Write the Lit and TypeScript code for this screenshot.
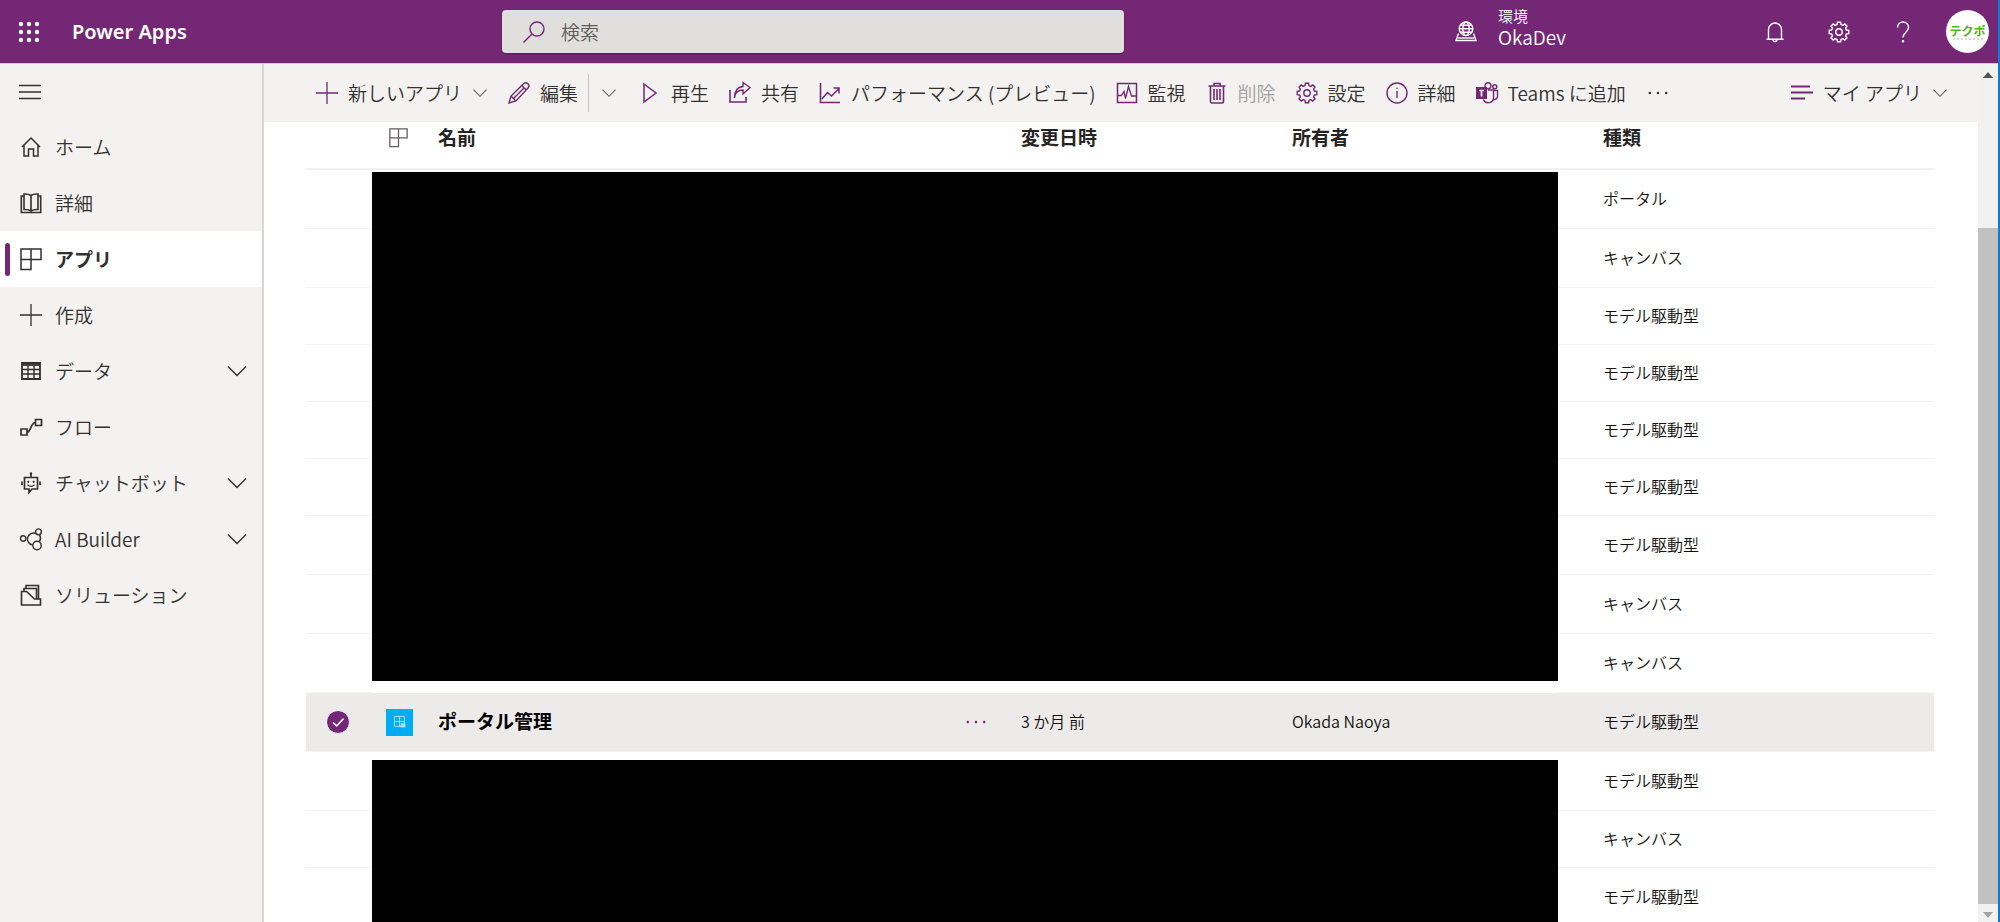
import { LitElement, html, svg, css, nothing, type SVGTemplateResult } from "lit";
import { customElement, property } from "lit/decorators.js";
import { classMap } from "lit/directives/class-map.js";

const GEAR = svg`<path d="M9.4 1.2h3.2l.4 2.4 1.8.8 2-1.4 2.2 2.2-1.4 2 .8 1.8 2.4.4v3.2l-2.4.4-.8 1.8 1.4 2-2.2 2.2-2-1.4-1.8.8-.4 2.4H9.4L9 18.4l-1.8-.8-2 1.4L3 16.8l1.4-2-.8-1.8-2.4-.4V9.4L3.6 9l.8-1.8L3 5.2 5.2 3l2 1.4L9 3.6z"/><circle cx="11" cy="11" r="3.2"/>`;

/* All glyphs share a 22 unit square and are stroked in the current colour. */
const ICONS: Record<string, SVGTemplateResult> = {
  launcher: svg`<g fill="currentColor" stroke="none">${[3, 11, 19].map((y) =>
    [3, 11, 19].map((x) => svg`<circle cx=${x} cy=${y} r="2.2"/>`))}</g>`,
  menu: svg`<path d="M0 4.5h22M0 11h22M0 17.5h22" stroke-width="1.6"/>`,
  search: svg`<circle cx="14" cy="8" r="7"/><path d="M9 13l-8.5 8.5"/>`,
  globe: svg`<circle cx="11" cy="7.8" r="6.8"/><ellipse cx="11" cy="7.8" rx="3.2" ry="6.8"/><path d="M4.2 7.8h13.6M5.2 4.3h11.6M5.2 11.3h11.6M3.5 12.5L1 19.5h20l-2.5-7"/><path d="M3 17h16"/>`,
  bell: svg`<path d="M2.5 18.3h17M4.5 18.3V8.5a6.5 6.5 0 0 1 13 0v9.8M9 18.5a2 2 0 0 0 4 0"/>`,
  gear: GEAR,
  help: svg`<path d="M5.5 6.5a5.5 5.5 0 0 1 11 0c0 4.5-5.5 5-5.5 10"/><circle cx="11" cy="20.3" r=".6" fill="currentColor"/>`,
  home: svg`<path d="M2 11l9-9 9 9M4 9.5V20h4.5v-7h5v7H18V9.5" stroke-width="1.5"/>`,
  book: svg`<path d="M11 3.5v15M11 3.5C9 2 7 1.800 4 2v15.5c3-.2 5 0 7 1.5 2-1.5 4-1.700 7-1.5V2c-3-.2-5 0-7 1.500" stroke-width="1.6"/><path d="M4 4H1.3v16.5h19.4V4H18" stroke-width="1.6"/>`,
  apps: svg`<path d="M1 1h20v10.5H1zM1 11.5V21.5h10V1" stroke-width="1.5"/>`,
  plus: svg`<path d="M11 0v22M0 11h22" stroke-width="1.3"/>`,
  table: svg`<path d="M2 3h18v16H2z" stroke-width="1.8"/><path d="M2 5h18" stroke-width="1.8"/><path d="M2 9.5h18M2 14h18M8 5v14M14 5v14"/>`,
  flow: svg`<path d="M1 13h6v6H1zM15.5 3.5h6v6h-6zM7 16.5c4 0 3.5-10 8.5-10" stroke-width="1.7"/>`,
  bot: svg`<path d="M4.5 5.5h13v11.5h-5.5L9 20.5V17H4.5zM11 5.5V2M2 9.5v3.5M20 9.5v3.5" stroke-width="1.7"/><circle cx="11" cy="1.5" r="1.2" fill="currentColor" stroke="none"/><circle cx="8.3" cy="9.8" r="1.1" fill="currentColor" stroke="none"/><circle cx="13.7" cy="9.8" r="1.1" fill="currentColor" stroke="none"/><path d="M7.5 12.8c2 2 5 2 7 0"/>`,
  ai: svg`<circle cx="3.2" cy="10.5" r="2.7"/><circle cx="18.5" cy="3.8" r="2.9"/><circle cx="17" cy="17.5" r="4.2"/><path d="M13 17a6 6 0 1 1 3-11.4M19.5 7a6 6 0 0 1 0 6.5"/>`,
  solution: svg`<path d="M1.5 21V7.5h5l8 7.5h6v6zM4 7.5V4.5h12.5V15M6 4.5V1.5h12.5V15" stroke-width="1.6"/>`,
  chevron: svg`<path d="M2 6.5l9 9 9-9"/>`,
  edit: svg`<path d="M1 21l2-7L15.5 1.8a2.6 2.6 0 0 1 4.5 4.2L8 19zM3 14l5 5M13.8 3.5l4.7 4.7M5.5 16.5L16 6"/>`,
  play: svg`<path d="M5 2l12 9-12 9z" stroke-width="1.5"/>`,
  share: svg`<path d="M1 8v12h16v-5" stroke-width="1.6"/><path d="M5.5 16c.5-5.5 3.5-8 8.5-8V12l7-6.5-7-5V4.5c-6 .5-8.5 5-8.5 11.5z" stroke-width="1.4"/>`,
  perf: svg`<path d="M1.5 1v19.5H21" stroke-width="1.6"/><path d="M3 17l5.5-6.5 4 3.5L20 6.5M14.5 6H20v5.5" stroke-width="1.5"/>`,
  monitor: svg`<path d="M1.5 1.5h19v19h-19z" stroke-width="1.5"/><path d="M2 13.5h3.5l2.5-4 1.5 7 3-12 3 9.5h5" stroke-width="1.3"/>`,
  trash: svg`<path d="M2.5 4h17M8 4V1.5h6V4M4.5 4v15.5a1.5 1.5 0 0 0 1.5 1.5h10a1.5 1.5 0 0 0 1.5-1.5V4M8 7v11M11 7v11M14 7v11" stroke-width="1.6"/>`,
  info: svg`<circle cx="11" cy="11" r="10"/><path d="M11 9v7"/><circle cx="11" cy="6.2" r=".8" fill="currentColor" stroke="none"/>`,
  teams: svg`<circle cx="12" cy="3.8" r="3"/><circle cx="18.8" cy="4.8" r="2"/><path d="M12 8h5.5v7.5a5.3 5.3 0 0 1-10.2 2M17.5 8.5h4v6a3 3 0 0 1-4 2.8"/><path d="M0 5h11v12H0z" fill="currentColor" stroke="none"/><path d="M3 8.5h5M5.5 8.5v6" stroke="#f3f2f1" stroke-width="1.7"/>`,
  more: svg`<g fill="currentColor" stroke="none"><circle cx="2" cy="11" r="1.4"/><circle cx="11" cy="11" r="1.4"/><circle cx="20" cy="11" r="1.4"/></g>`,
  view: svg`<path d="M0 4.5h19M0 10.5h22M0 16.5h14" stroke-width="2"/>`,
  check: svg`<path d="M5.5 11.5l4 3.8 7.5-8" stroke-width="1.7"/>`,
  portal: svg`<path d="M1 1h18v18H1zM10 1v18M1 10h18"/><path d="M12 13h9v8h-9z" fill="currentColor" stroke="none" opacity=".7"/>`,
};

@customElement("pa-icon")
class PaIcon extends LitElement {
  @property() name = "";
  static styles = css`
    :host { display: block; flex: none; width: 22px; height: 22px; }
    svg { display: block; width: 100%; height: 100%; overflow: visible; }
  `;
  render() {
    return html`<svg viewBox="0 0 22 22" fill="none" stroke="currentColor" stroke-width="1.4" aria-hidden="true">${ICONS[this.name]}</svg>`;
  }
}

interface NavItem { icon: string; label: string; expandable?: boolean; current?: boolean }
interface Command { icon: string; label: string; menu?: boolean; split?: boolean; disabled?: boolean }
interface AppRow { type: string; compact?: boolean }

const NAV: NavItem[] = [
  { icon: "home", label: "ホーム" },
  { icon: "book", label: "詳細" },
  { icon: "apps", label: "アプリ", current: true },
  { icon: "plus", label: "作成" },
  { icon: "table", label: "データ", expandable: true },
  { icon: "flow", label: "フロー" },
  { icon: "bot", label: "チャットボット", expandable: true },
  { icon: "ai", label: "AI Builder", expandable: true },
  { icon: "solution", label: "ソリューション" },
];

const COMMANDS: Command[] = [
  { icon: "plus", label: "新しいアプリ", menu: true },
  { icon: "edit", label: "編集", split: true },
  { icon: "play", label: "再生" },
  { icon: "share", label: "共有" },
  { icon: "perf", label: "パフォーマンス (プレビュー)" },
  { icon: "monitor", label: "監視" },
  { icon: "trash", label: "削除", disabled: true },
  { icon: "gear", label: "設定" },
  { icon: "info", label: "詳細" },
  { icon: "teams", label: "Teams に追加" },
];

const CANVAS = "キャンバス";
const MODEL = "モデル駆動型";

const ROWS_ABOVE: AppRow[] = [
  { type: "ポータル" },
  { type: CANVAS },
  { type: MODEL, compact: true },
  { type: MODEL, compact: true },
  { type: MODEL, compact: true },
  { type: MODEL, compact: true },
  { type: MODEL },
  { type: CANVAS },
  { type: CANVAS },
];

const ROWS_BELOW: AppRow[] = [
  { type: MODEL },
  { type: CANVAS, compact: true },
  { type: MODEL },
];

@customElement("app-root")
class AppRoot extends LitElement {
  static styles = css`
    :host {
      display: flex;
      flex-direction: column;
      height: 100vh;
      box-sizing: border-box;
      overflow: hidden;
      border-right: 2px solid #0f7ad1;
      background: #fff;
      color: #323130;
      font-family: "Noto Sans CJK JP", sans-serif;
      font-size: 19px;
      font-weight: 350;
      line-height: 28px;
    }
    *, *::before { box-sizing: border-box; }
    button, input { font: inherit; color: inherit; }
    button { display: flex; align-items: center; margin: 0; padding: 0; border: 0; background: none; white-space: nowrap; }
    a { color: inherit; text-decoration: none; }

    .header {
      display: grid;
      grid-template-columns: 502px minmax(0, 622px) 1fr;
      align-items: center;
      height: 64px;
      flex: none;
      background: #742774;
      border-bottom: 1px solid #d9c3d9;
      color: #fff;
    }
    .brand { display: flex; align-items: center; gap: 32px; padding-left: 18px; }
    .title { font-family: "Noto Sans", sans-serif; font-size: 20px; font-weight: 600; }
    .search {
      display: flex;
      align-items: center;
      gap: 16px;
      height: 43px;
      padding: 0 21px;
      border-radius: 4px;
      background: #e1dfdd;
      color: #742774;
      box-shadow: 0 1px 2px rgba(0, 0, 0, 0.3);
    }
    .search input { flex: 1; min-width: 0; padding: 0; border: 0; outline: 0; background: none; color: #323130; }
    .search input::placeholder { color: #605e5c; opacity: 1; }
    .tools { display: flex; align-items: center; justify-content: flex-end; padding-right: 9px; }
    .environment { gap: 21px; margin-right: 198px; text-align: left; }
    .environment-text { display: flex; flex-direction: column; padding-bottom: 10px; line-height: 22px; }
    .caption { font-size: 15px; line-height: 20px; }
    .actions { display: flex; align-items: center; gap: 42px; }
    .avatar {
      display: flex;
      flex-direction: column;
      align-items: center;
      justify-content: center;
      width: 43px;
      height: 43px;
      margin-left: 32px;
      border-radius: 50%;
      background: #fff;
      color: #4fb51c;
      font-size: 12px;
      font-weight: 700;
      line-height: 14px;
    }
    .avatar::after { content: ""; width: 30px; border-bottom: 2px dotted #d6d6d6; }

    .body { display: flex; flex: 1; min-height: 0; }
    .sidebar {
      flex: none;
      width: 264px;
      background: #f3f2f1;
      border-right: 2px solid #d8d6d5;
    }
    .toggle { height: 55px; padding: 0 19px; }
    .nav { display: flex; flex-direction: column; margin: 0; padding: 0; list-style: none; }
    .nav-link { display: flex; align-items: center; gap: 13px; height: 56px; padding: 0 14px 0 20px; }
    .nav-label { flex: 1; }
    .nav-link.current { background: #fff; font-weight: 700; padding-left: 5px; gap: 10px; }
    .nav-link.current::before { content: ""; width: 5px; height: 33px; border-radius: 3px; background: #742774; }
    .nav-link.current .nav-label { padding-left: 3px; }

    .main { flex: 1; min-width: 0; display: flex; flex-direction: column; overflow: hidden; }
    .commands {
      display: flex;
      align-items: center;
      flex: none;
      height: 58px;
      padding: 0 20px 0 42px;
      background: #f3f2f1;
    }
    .command { gap: 10px; height: 38px; padding: 0 10px; }
    .command pa-icon, .overflow pa-icon { color: #742774; }
    .command:disabled { color: #a19f9d; }
    .chevron { width: 16px; height: 16px; }
    .nav-link .chevron { width: 22px; height: 22px; }
    .command .chevron, .split .chevron { color: #605e5c; }
    .split { height: 38px; padding: 0 12px; border-left: 1px solid #c8c6c4; }
    .overflow { height: 38px; padding: 0 12px; }
    .overflow pa-icon { color: #323130; width: 20px; height: 20px; }
    .filter { margin-left: auto; }

    .list { flex: 1; min-height: 0; overflow: hidden; padding: 0 44px 0 42px; }
    .table { width: 100%; table-layout: fixed; border-collapse: separate; border-spacing: 0; font-size: 16px; line-height: 24px; color: #11100f; }
    .col-check { width: 66px; }
    .col-icon { width: 54px; }
    .col-menu { width: 65px; }
    .col-modified { width: 271px; }
    .col-owner { width: 278px; }
    .col-type { width: 376px; }
    th { height: 48px; padding: 0 0 16px 12px; border-bottom: 2px solid #f3f2f1; font-size: 19px; line-height: 28px; text-align: left; color: #252423; }
    .th-icon { padding-left: 17px; color: #605e5c; }
    .th-icon pa-icon { width: 19px; height: 19px; }
    .type { padding-left: 45px; }
    td { height: 59px; padding: 0 0 2px 12px; border-bottom: 1px solid #f3f2f1; }
    .compact td { height: 57px; }
    .redacted { position: relative; border: 0; }
    .redaction { position: absolute; inset: 2px 0 12px 0; background: #000; }
    .redaction.tail { inset: 8px 0 0 0; }
    .selected td { background: #edebe9; border-color: #f3f2f1; }
    td.cell-check { padding: 0 0 0 20px; }
    td.cell-tile { padding: 0 0 0 14px; }
    td.cell-menu { padding-bottom: 0; }
    .check { display: grid; width: 24px; height: 24px; color: #fff; }
    .check input { grid-area: 1 / 1; appearance: none; width: 24px; height: 24px; margin: 0; border: 1px solid #fff; border-radius: 50%; background: #742774; }
    .check pa-icon { grid-area: 1 / 1; width: 20px; height: 20px; place-self: center; z-index: 1; pointer-events: none; }
    .tile { display: grid; place-items: center; width: 27px; height: 27px; background: #00adf5; color: #c6edfd; }
    .tile pa-icon { width: 12px; height: 12px; }
    .name { font-size: 19px; font-weight: 700; line-height: 28px; color: #000; }
    .row-menu { height: 32px; padding: 0 10px; color: #742774; }
    .row-menu pa-icon { width: 20px; height: 20px; }

    .scrollbar { display: flex; flex-direction: column; align-items: center; flex: none; width: 20px; background: #f1f1f1; }
    .arrow { width: 0; height: 0; margin: 8px 0; border: 5px solid transparent; border-top-width: 0; border-bottom: 6px solid #505050; }
    .arrow.down { margin: 8px 0 4px; border-bottom-width: 0; border-top: 6px solid #a3a3a3; }
    .track { display: grid; grid-template-rows: 142fr 677fr; flex: 1; width: 100%; }
    .thumb { grid-row: 2; background: #c1c1c1; }
  `;

  private navItem(item: NavItem) {
    return html`<li>
      <a class=${classMap({ "nav-link": true, current: !!item.current })} href="#" aria-current=${item.current ? "page" : nothing}>
        <pa-icon name=${item.icon}></pa-icon>
        <span class="nav-label">${item.label}</span>
        ${item.expandable ? html`<pa-icon class="chevron" name="chevron"></pa-icon>` : nothing}
      </a>
    </li>`;
  }

  private command(item: Command) {
    return html`<button class="command" type="button" ?disabled=${item.disabled}>
        <pa-icon name=${item.icon}></pa-icon>
        <span>${item.label}</span>
        ${item.menu ? html`<pa-icon class="chevron" name="chevron"></pa-icon>` : nothing}
      </button>
      ${item.split
        ? html`<button class="split" type="button" aria-label="編集オプション"><pa-icon class="chevron" name="chevron"></pa-icon></button>`
        : nothing}`;
  }

  private rows(rows: AppRow[], tail: boolean) {
    return rows.map((row, i) => html`<tr class=${classMap({ compact: !!row.compact })}>
      <td></td>
      ${i === 0
        ? html`<td class="redacted" colspan="5" rowspan=${rows.length}><div class=${classMap({ redaction: true, tail })}></div></td>`
        : nothing}
      <td class="type">${row.type}</td>
    </tr>`);
  }

  render() {
    return html`
      <header class="header">
        <div class="brand">
          <button type="button" aria-label="アプリ起動ツール"><pa-icon name="launcher"></pa-icon></button>
          <span class="title">Power Apps</span>
        </div>
        <label class="search">
          <pa-icon name="search"></pa-icon>
          <input type="search" placeholder="検索" aria-label="検索" />
        </label>
        <div class="tools">
          <button class="environment" type="button">
            <pa-icon name="globe"></pa-icon>
            <span class="environment-text"><span class="caption">環境</span><span>OkaDev</span></span>
          </button>
          <div class="actions">
            <button type="button" aria-label="通知"><pa-icon name="bell"></pa-icon></button>
            <button type="button" aria-label="設定"><pa-icon name="gear"></pa-icon></button>
            <button type="button" aria-label="ヘルプ"><pa-icon name="help"></pa-icon></button>
          </div>
          <span class="avatar">テクポ</span>
        </div>
      </header>
      <div class="body">
        <nav class="sidebar">
          <button class="toggle" type="button" aria-label="メニュー"><pa-icon name="menu"></pa-icon></button>
          <ul class="nav">${NAV.map((item) => this.navItem(item))}</ul>
        </nav>
        <main class="main">
          <div class="commands" role="toolbar">
            ${COMMANDS.map((item) => this.command(item))}
            <button class="overflow" type="button" aria-label="その他"><pa-icon name="more"></pa-icon></button>
            <button class="command filter" type="button">
              <pa-icon name="view"></pa-icon><span>マイ アプリ</span><pa-icon class="chevron" name="chevron"></pa-icon>
            </button>
          </div>
          <div class="list">
            <table class="table">
              <colgroup>
                <col class="col-check" /><col class="col-icon" /><col /><col class="col-menu" />
                <col class="col-modified" /><col class="col-owner" /><col class="col-type" />
              </colgroup>
              <thead>
                <tr>
                  <th></th>
                  <th class="th-icon"><pa-icon name="apps"></pa-icon></th>
                  <th colspan="2">名前</th>
                  <th>変更日時</th>
                  <th>所有者</th>
                  <th class="type">種類</th>
                </tr>
              </thead>
              <tbody>${this.rows(ROWS_ABOVE, false)}</tbody>
              <tbody>
                <tr class="selected">
                  <td class="cell-check">
                    <label class="check"><input type="checkbox" checked aria-label="ポータル管理" /><pa-icon name="check"></pa-icon></label>
                  </td>
                  <td class="cell-tile"><span class="tile"><pa-icon name="portal"></pa-icon></span></td>
                  <td><a class="name" href="#">ポータル管理</a></td>
                  <td class="cell-menu"><button class="row-menu" type="button" aria-label="コマンド"><pa-icon name="more"></pa-icon></button></td>
                  <td>3 か月 前</td>
                  <td>Okada Naoya</td>
                  <td class="type">${MODEL}</td>
                </tr>
              </tbody>
              <tbody>${this.rows(ROWS_BELOW, true)}</tbody>
            </table>
          </div>
        </main>
        <div class="scrollbar" aria-hidden="true">
          <span class="arrow"></span>
          <span class="track"><span class="thumb"></span></span>
          <span class="arrow down"></span>
        </div>
      </div>
    `;
  }
}
